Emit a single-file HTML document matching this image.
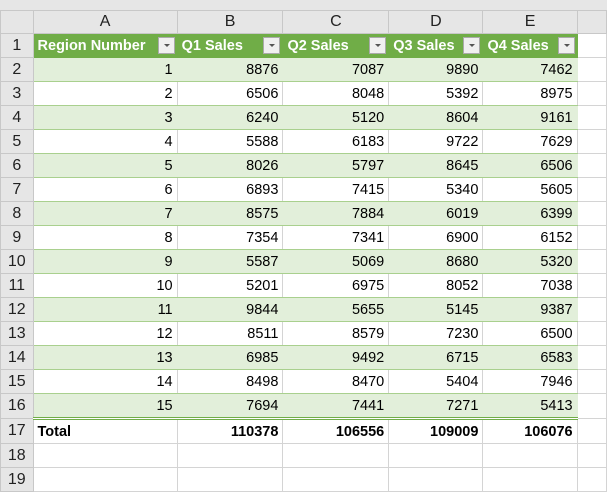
<!DOCTYPE html><html><head><style>
body{margin:0;width:607px;height:484px;overflow:hidden;background:#fff;font-family:"Liberation Sans",sans-serif;font-size:14.5px;}
.top{position:absolute;left:0;top:0;width:607px;height:10px;background:#e6e6e6;}
table{position:absolute;left:0;top:10px;border-collapse:collapse;table-layout:fixed;}
td{height:23px;border:1px solid #d4d4d4;padding:0 4px;white-space:nowrap;overflow:hidden;text-align:right;color:#000;}
tr.ch td{height:22px;background:#e6e6e6;text-align:center;color:#222;font-size:16px;border-color:#c8c8c8;}
td.rh{background:#e6e6e6;text-align:center;color:#222;font-size:16px;padding:0;border-color:#c8c8c8;}
tr.h td.d{background:#70ad47;color:#fff;font-weight:bold;text-align:left;position:relative;border-color:#70ad47;}
.dd{position:absolute;right:2px;top:3px;width:17px;height:17px;background:#f0f0f0;border:1px solid #aaa;box-sizing:border-box;}
.dd:after{content:"";position:absolute;left:5px;top:6px;border-left:3px solid transparent;border-right:3px solid transparent;border-top:3px solid #555;}
tr.g td.d{background:#e2efda;border-top-color:#a9d08e;border-bottom-color:#a9d08e;border-left-color:#e2efda;border-right-color:#e2efda;}
tr.w td.d{border-top-color:#a9d08e;border-bottom-color:#a9d08e;}
tr.t td.d{font-weight:bold;border-top:3px double #70ad47;}
</style></head><body><div class="top"></div>
<table>
<colgroup><col style="width:33px"><col style="width:145px"><col style="width:107px"><col style="width:107px"><col style="width:95px"><col style="width:95px"><col style="width:30px"></colgroup>
<tr class="ch"><td style="background:#e6e6e6"></td><td>A</td><td>B</td><td>C</td><td>D</td><td>E</td><td></td></tr>
<tr class="h"><td class="rh">1</td><td class="d">Region Number<span class="dd"></span></td><td class="d">Q1 Sales<span class="dd"></span></td><td class="d">Q2 Sales<span class="dd"></span></td><td class="d">Q3 Sales<span class="dd"></span></td><td class="d">Q4 Sales<span class="dd"></span></td><td></td></tr>
<tr class="g"><td class="rh">2</td><td class="d">1</td><td class="d">8876</td><td class="d">7087</td><td class="d">9890</td><td class="d">7462</td><td></td></tr>
<tr class="w"><td class="rh">3</td><td class="d">2</td><td class="d">6506</td><td class="d">8048</td><td class="d">5392</td><td class="d">8975</td><td></td></tr>
<tr class="g"><td class="rh">4</td><td class="d">3</td><td class="d">6240</td><td class="d">5120</td><td class="d">8604</td><td class="d">9161</td><td></td></tr>
<tr class="w"><td class="rh">5</td><td class="d">4</td><td class="d">5588</td><td class="d">6183</td><td class="d">9722</td><td class="d">7629</td><td></td></tr>
<tr class="g"><td class="rh">6</td><td class="d">5</td><td class="d">8026</td><td class="d">5797</td><td class="d">8645</td><td class="d">6506</td><td></td></tr>
<tr class="w"><td class="rh">7</td><td class="d">6</td><td class="d">6893</td><td class="d">7415</td><td class="d">5340</td><td class="d">5605</td><td></td></tr>
<tr class="g"><td class="rh">8</td><td class="d">7</td><td class="d">8575</td><td class="d">7884</td><td class="d">6019</td><td class="d">6399</td><td></td></tr>
<tr class="w"><td class="rh">9</td><td class="d">8</td><td class="d">7354</td><td class="d">7341</td><td class="d">6900</td><td class="d">6152</td><td></td></tr>
<tr class="g"><td class="rh">10</td><td class="d">9</td><td class="d">5587</td><td class="d">5069</td><td class="d">8680</td><td class="d">5320</td><td></td></tr>
<tr class="w"><td class="rh">11</td><td class="d">10</td><td class="d">5201</td><td class="d">6975</td><td class="d">8052</td><td class="d">7038</td><td></td></tr>
<tr class="g"><td class="rh">12</td><td class="d">11</td><td class="d">9844</td><td class="d">5655</td><td class="d">5145</td><td class="d">9387</td><td></td></tr>
<tr class="w"><td class="rh">13</td><td class="d">12</td><td class="d">8511</td><td class="d">8579</td><td class="d">7230</td><td class="d">6500</td><td></td></tr>
<tr class="g"><td class="rh">14</td><td class="d">13</td><td class="d">6985</td><td class="d">9492</td><td class="d">6715</td><td class="d">6583</td><td></td></tr>
<tr class="w"><td class="rh">15</td><td class="d">14</td><td class="d">8498</td><td class="d">8470</td><td class="d">5404</td><td class="d">7946</td><td></td></tr>
<tr class="g"><td class="rh">16</td><td class="d">15</td><td class="d">7694</td><td class="d">7441</td><td class="d">7271</td><td class="d">5413</td><td></td></tr>
<tr class="t"><td class="rh">17</td><td class="d" style="text-align:left">Total</td><td class="d">110378</td><td class="d">106556</td><td class="d">109009</td><td class="d">106076</td><td></td></tr>
<tr><td class="rh">18</td><td></td><td></td><td></td><td></td><td></td><td></td></tr>
<tr><td class="rh">19</td><td></td><td></td><td></td><td></td><td></td><td></td></tr>
</table></body></html>
